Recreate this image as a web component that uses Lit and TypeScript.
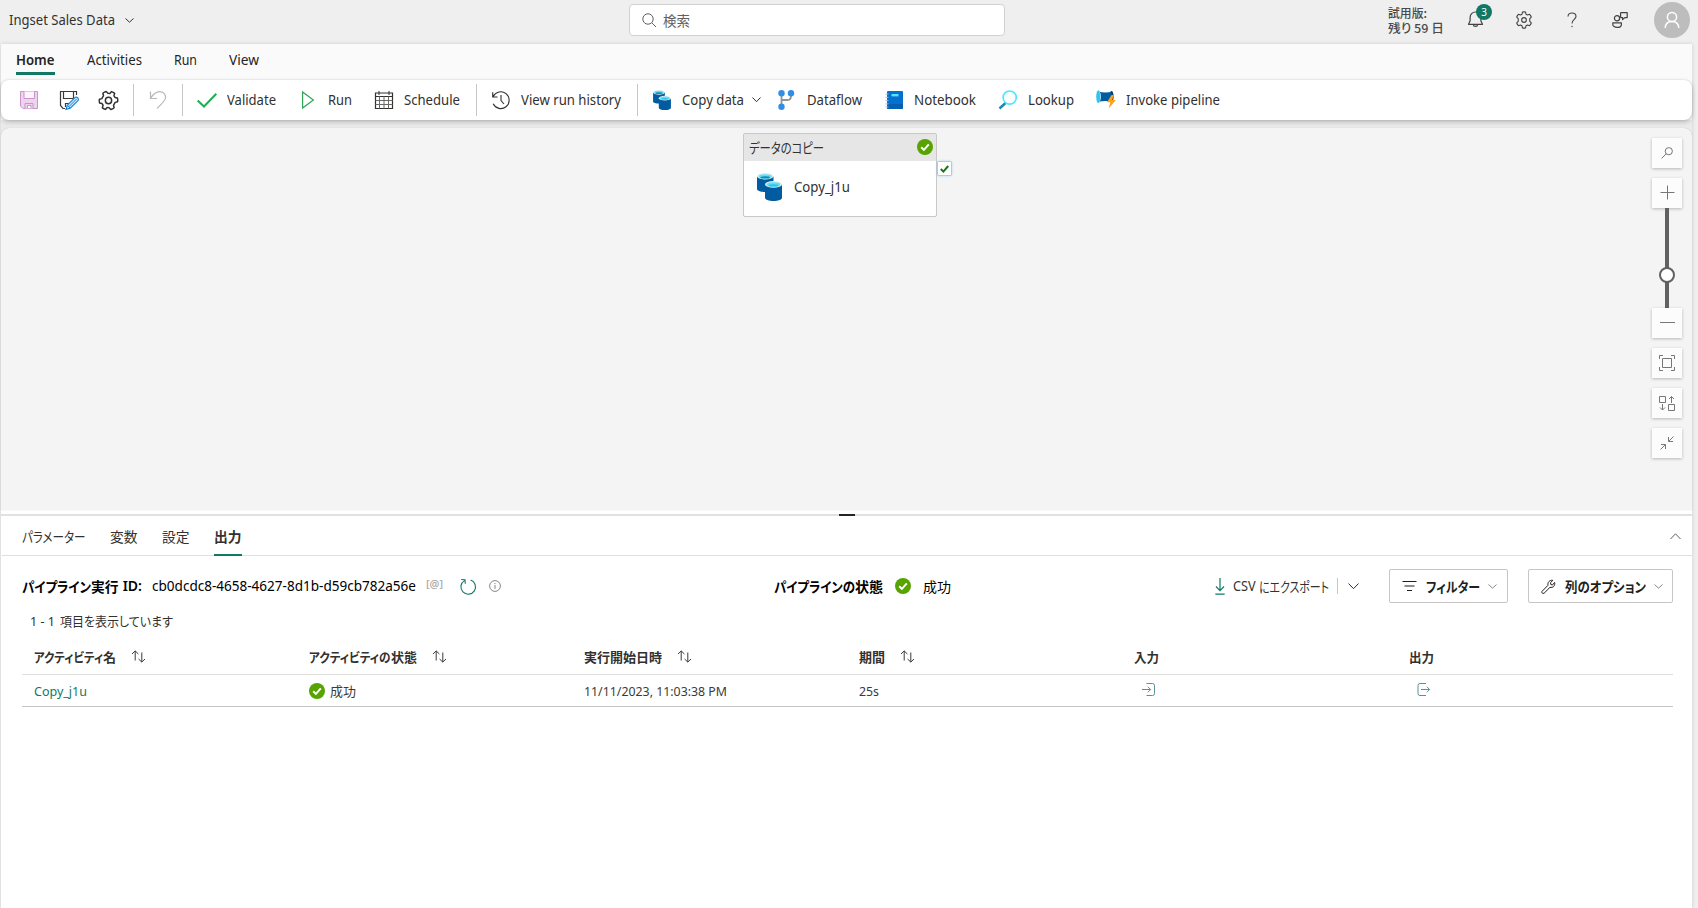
import { LitElement, html, svg, css, nothing } from "lit";
import { customElement, property } from "lit/decorators.js";

/* A label condensed or widened to an exact advance width. */
@customElement("fit-label")
class FitLabel extends LitElement {
  @property() text = "";
  @property({ type: Number }) w = 0;
  static styles = css`
    :host { display: inline-block; flex: none; white-space: pre; }
    .ink { display: inline-block; transform-origin: 0 50%; }
  `;
  updated() {
    const ink = this.renderRoot.querySelector(".ink") as HTMLElement;
    ink.style.transform = "none";
    const natural = ink.getBoundingClientRect().width;
    if (natural > 0) ink.style.transform = `scaleX(${this.w / natural})`;
    this.style.width = `${this.w}px`;
  }
  render() {
    return html`<span class="ink">${this.text}</span>`;
  }
}

const t = (text: string, w: number, cls = "") => html`<fit-label class=${cls} .text=${text} .w=${w}></fit-label>`;

const icon = (w: number, h: number, body: unknown, cls = "") =>
  html`<svg class="ic ${cls}" width=${w} height=${h} viewBox="0 0 ${w} ${h}" fill="none" stroke="currentColor">${body}</svg>`;

const chevron = (w: number, h: number, cls = "") =>
  icon(w, h, svg`<path d="M.5 .5L${w / 2} ${h - 0.8}L${w - 0.5} .5"/>`, cls);

const okCircle = icon(16, 16, svg`<circle cx="8" cy="8" r="8" fill="#57a300" stroke="none"/><path d="M4.2 8.2L6.9 10.9L11.8 5.4" stroke="#fff" stroke-width="2"/>`);

const gearPath = "M8.3 1.2Q10 .8 11.7 1.2L12.2 3.5L13.9 4.4L16.2 3.7Q17.5 5 18.1 6.7L16.4 8.4V11.6L18.1 13.3Q17.5 15 16.2 16.3L13.9 15.6L12.2 16.5L11.7 18.8Q10 19.2 8.3 18.8L7.8 16.5L6.1 15.6L3.8 16.3Q2.5 15 1.9 13.3L3.6 11.6V8.4L1.9 6.7Q2.5 5 3.8 3.7L6.1 4.4L7.8 3.5Z";
const gear = (s: number, r: number, sw: number, turn = 0) => html`<svg class="ic" width=${s} height=${s} viewBox="0 0 20 20" fill="none" stroke="currentColor" stroke-linejoin="round" stroke-width=${sw}><path d=${gearPath} transform="rotate(${turn} 10 10)"/><circle cx="10" cy="10" r=${r}/></svg>`;

const cylinders = (w: number, h: number) => html`<svg class="ic" width=${w} height=${h} viewBox="0 0 25 28">
  <path d="M0 3.5V16C0 17.8 4 19 8 19S16.5 17.8 16.5 16V3.5Z" fill="#005ba1"/>
  <ellipse cx="8.2" cy="3.3" rx="8.2" ry="3.2" fill="#e8e8e8"/><ellipse cx="8.2" cy="3.4" rx="6.6" ry="2.2" fill="#50e6ff"/><ellipse cx="8.2" cy="4.4" rx="4.8" ry="1.2" fill="#198ab3"/>
  <path d="M8 11.5V24.8C8 26.8 12 28 16.5 28S25 26.8 25 24.8V11.5Z" fill="#005ba1"/>
  <ellipse cx="16.5" cy="11.4" rx="8.5" ry="3.3" fill="#e8e8e8"/><ellipse cx="16.5" cy="11.5" rx="6.9" ry="2.3" fill="#50e6ff"/><ellipse cx="16.5" cy="12.4" rx="5" ry="1.2" fill="#32c5e6"/>
</svg>`;

const saveIcon = icon(20, 20, svg`<path d="M1.5 1.5H18.5V18.5H4L1.5 16Z" fill="#eed3ef" stroke="#c994cd"/><path d="M5 1.5V8.5H15.5V1.5" fill="#fbf4fb" stroke="#c994cd"/><path d="M6 18.5V13.5H14V18.5" fill="#eed3ef" stroke="#c994cd"/><path d="M8.5 18V15.5H12V18" fill="#fff" stroke="#c994cd"/>`);
const saveAsIcon = icon(20, 20, svg`<path d="M17.5 5V1.5H1.5V15.5L4 18.5H6M4.5 1.5V8.5H14.5V1.5M6.5 17V13.5H10" stroke="#3b3a39" stroke-width="1.2"/><path d="M7 19.3L8.3 15.3L15.9 7.6Q17.2 6.4 18.8 7.8Q20.2 9.4 19 10.6L11.2 18.2Z" fill="#cfe8fa" stroke="#1a86d9" stroke-width="1.2"/><path d="M8.5 15.3L11 18M10 16.6L17.5 9" stroke="#1a86d9"/>`);
const undoIcon = icon(20, 20, svg`<path d="M2.5 1.5V8.5H9M2.8 8C6 3 9 1.5 12 1.7C16 2 18 5 17.5 8C17 11 14 13.5 9 18.5" stroke="#b9b7b5" stroke-width="1.2"/>`);
const checkIcon = icon(20, 20, svg`<path d="M.7 10.5L7 16.5L19.3 3.8" stroke="#1fae53" stroke-width="2"/>`);
const playIcon = icon(20, 20, svg`<path d="M4.6 2V18L15.4 10Z" stroke="#2fa557" stroke-width="1.2"/>`);
const calendarIcon = icon(20, 20, svg`<path d="M1.5 3H18.5V18.5H1.5ZM1.5 6.5H18.5" stroke="#323130" stroke-width="1.2"/><path d="M5 1V5M15 1V5" stroke="#323130"/><path d="M1.5 10.5H18.5M1.5 14.5H18.5M5.5 6.5V18.5M10 6.5V18.5M14.5 6.5V18.5" stroke="#6b6967"/>`);
const historyIcon = icon(20, 20, svg`<path d="M1.7 2.2V7H6.5M2.2 6.5A8.4 8.4 0 1 1 2.2 13.8M10 5V10.5L13 14" stroke="#323130" stroke-width="1.1"/>`);
const flowIcon = icon(20, 20, svg`<path d="M4.5 4V16M14 4V6Q14 10 10.5 10H4.5" stroke="#949494" stroke-width="1.8"/><g fill="#2f8fe6" stroke="none"><circle cx="4.5" cy="3.3" r="3.2"/><circle cx="14" cy="3.3" r="3.2"/><circle cx="4.5" cy="16.8" r="3.2"/></g>`);
const notebookIcon = icon(20, 20, svg`<rect x="3" y="1" width="16" height="18" rx="1" fill="#0670ce" stroke="none"/><rect x="3" y="14" width="16" height="5" rx="1" fill="#0560b2" stroke="none"/><rect x="7.5" y="4" width="7" height="2.4" fill="#50e6ff" stroke="none"/><path d="M1.5 4H4.5M1.5 7.3H4.5M1.5 10.6H4.5M1.5 13.9H4.5M1.5 17H4.5" stroke="#9cc3e4"/>`);
const lookupIcon = icon(20, 20, svg`<path d="M7.5 13L1.5 18.5" stroke="#1f86b0" stroke-width="2.4"/><circle cx="11.7" cy="7.6" r="6.6" stroke="#50e6ff" stroke-width="1.7" fill="#fdffff"/>`);
const invokeIcon = icon(20, 20, svg`<g stroke="none"><path d="M2.5 1.8Q9 3.4 16.5 1.8V11.8Q9 10.4 2.5 11.8Z" fill="#005ba1"/><ellipse cx="2.4" cy="6.6" rx="2.2" ry="6.4" fill="#32c5e6"/><path d="M3 .4Q5.4 6.6 3 12.8Q7 6.6 3 .4Z" fill="#bfe6f5"/><path d="M14.5 1Q17.6 .4 17.6 6.8Q17.6 12.4 14.5 12Q16.4 6.6 14.5 1Z" fill="#003f73"/><path d="M15.5 5L11 12.2H14.3L12.8 18.5L19.8 10H16.3L17.5 5Z" fill="#fea11b"/></g>`);

const sortIcon = icon(15, 13, svg`<path d="M4.2 10.5V1M1 4L4.2 .9L7.4 4M10.8 2.5V12M7.6 9L10.8 12.1L14 9" stroke="#3b3a39"/>`, "sort");

@customElement("app-root")
class AppRoot extends LitElement {
  static styles = css`
    :host {
      display: block; width: 1698px; height: 908px; overflow: hidden; background: #efefef; color: #323130;
      font: 13.5px/20px "Noto Sans", "Noto Sans CJK JP", sans-serif; font-feature-settings: "palt";
    }
    * { box-sizing: border-box; }
    .ic { display: block; flex: none; overflow: visible; }
    .row { display: flex; align-items: center; }
    .jp { font-family: "Noto Sans CJK JP", sans-serif; font-size: 14px; }
    .small { font-size: 13px; }
    .semi { font-weight: 600; }
    .jp.semi { font-weight: 700; }

    .top { display: grid; grid-template-columns: 629px 376px 1fr; height: 44px; padding-bottom: 4px; align-items: center; }
    .crumb { padding-left: 9px; gap: 10px; height: 38px; }
    .search { height: 32px; background: #fff; border: 1px solid #d1d1d1; border-radius: 4px; padding-left: 12px; gap: 6px; color: #616161; }
    .tools { padding-left: 383px; color: #424242; height: 40px; }
    .trial { width: 80px; font-size: 12px; line-height: 15px; display: flex; flex-direction: column; color: #4a4a4a; font-weight: 500; font-family: "Noto Sans CJK JP", sans-serif; }
    .bell { position: relative; width: 16px; height: 16px; }
    .badge { position: absolute; left: 8px; top: -8px; width: 16px; height: 16px; border-radius: 8px; background: #117865; color: #fff; font-size: 10px; line-height: 16px; text-align: center; }
    .g1 { margin-left: 31px; } .g2 { margin-left: 34px; } .g3 { margin-left: 35px; }
    .avatar { margin-left: 26px; width: 36px; height: 36px; border-radius: 18px; background: #bdbdbd; color: #fff; display: grid; place-items: center; }

    .page { width: 1691px; margin-left: 1px; height: 864px; background: #fafafa; box-shadow: 0 0 4px rgba(0,0,0,.14); }
    .menu { height: 36px; padding-left: 15px; gap: 32px; align-items: flex-start; color: #242424; }
    .tab { height: 31px; padding-top: 6px; }
    .tab.on { border-bottom: 3px solid #117865; font-weight: 600; }
    .ribbon { position: relative; height: 40px; background: #fff; border-radius: 8px; box-shadow: 0 2px 5px rgba(0,0,0,.22), 0 0 2px rgba(0,0,0,.12); padding-left: 18px; }
    .cmd { gap: 10px; margin-right: 22px; }
    .cmd.tight { margin-right: 16px; }
    .cmd.drop { gap: 8px; margin: 0 15.5px 0 1px; }
    .cmd.drop .ic:first-child { margin-right: 3px; }
    .only { margin-right: 20px; }
    .only.last { margin: 0 14px 0 -1px; }
    .only.undo { margin: 0 14px; }
    .sep { width: 1px; height: 32px; background: #c8c6c4; }
    .sep.pad { margin-right: 14px; }

    .stage { height: 390px; padding-top: 8px; background: #ebebeb; }
    .canvas { position: relative; height: 382px; background: #f4f4f4; border-radius: 8px 8px 0 0; box-shadow: 0 0 1px rgba(0,0,0,.25); }
    .node { position: absolute; left: 742px; top: 5px; width: 194px; height: 84px; background: #fff; border: 1px solid #c8c8c8; border-radius: 2px; }
    .nodehead { height: 27px; background: #e6e6e6; padding: 0 3px 1px 5px; justify-content: space-between; color: #323130; }
    .nodebody { height: 55px; padding: 0 0 4px 13px; gap: 12px; }
    .port { position: absolute; left: 937px; top: 34px; width: 13px; height: 13px; background: #fff; box-shadow: 0 0 0 .5px #8cbde8, 0 0 3px #74b3ec; display: grid; place-items: center; }
    .zoom { position: absolute; left: 1651px; top: 10px; width: 30px; display: flex; flex-direction: column; gap: 10px; color: #777; }
    .sq { width: 30px; height: 30px; padding-bottom: 1px; background: #fcfcfc; box-shadow: 0 1px 3px rgba(0,0,0,.25); display: grid; place-items: center; }
    .slide { display: flex; flex-direction: column; align-items: center; }
    .track { width: 4px; height: 100px; background: #616161; padding-top: 59px; }
    .knob { width: 16px; height: 16px; margin-left: -6px; border-radius: 8px; border: 2px solid #616161; background: #fff; }

    .panel { height: 398px; background: #fff; padding-top: 4px; }
    .grip { height: 2px; background: #e1e1e1; padding-left: 838px; }
    .grip i { display: block; width: 16px; height: 2px; background: #252423; }
    .tabs { margin-left: 1px; height: 40px; border-bottom: 1px solid #e1dfdd; padding-left: 20px; gap: 24.5px; align-items: flex-start; color: #323130; }
    .ptab { height: 40px; padding-top: 10px; }
    .ptab.on { border-bottom: 2px solid #117865; }
    .up { margin: 17px 11px 0 auto; transform: scaleY(-1); color: #605e5c; }
    .body { padding: 13px 19px 0 21px; }
    .info { height: 34px; color: #000; }
    .id { width: 752px; }
    .state { width: 440.5px; gap: 12px; }
    .at { font-size: 11px; color: #b3b0ad; margin: -4px 17px 0 10px; font-weight: 600; }
    .guid { margin-left: 10px; }
    .teal { color: #117865; }
    .refresh { margin-right: 13px; color: #117865; }
    .csv { color: #323130; gap: 8px; width: 174.5px; }
    .vsep { width: 1px; height: 16px; background: #c8c6c4; margin-right: 2px; }
    .btn { height: 34px; border: 1px solid #c8c6c4; border-radius: 2px; width: 119px; padding-left: 12px; color: #201f1e; gap: 8px; }
    .btn.wide { width: 145px; margin-left: auto; padding-left: 12px; }
    .btn .txt { margin-left: 1px; }
    .btn.wide .txt { margin-left: 2px; }
    .muted { color: #8a8886; }
    .count { margin: 8px 0 0 8px; height: 20px; gap: 5px; }
    .grid { display: grid; grid-template-columns: repeat(6, 275.1px); padding-left: 12px; align-items: center; font-size: 13px; }
    .head { height: 44px; border-bottom: 1px solid #e1dfdd; padding-top: 8px; color: #323130; }
    .line { height: 32px; border-bottom: 1px solid #c8c6c4; color: #3b3a39; }
    .sort { margin-left: 15px; }
    .cellok { gap: 5px; }
    .io { color: #5b8f99; margin: -3px 0 0 7.5px; }
  `;

  private heads: [Array<[string, number]>, boolean][] = [
    [[["アクティビティ", 69], ["名", 13]], true],
    [[["アクティビティの", 81.5], ["状態", 26]], true],
    [[["実行開始日時", 78]], true],
    [[["期間", 26]], true],
    [[["入力", 25]], false],
    [[["出力", 25]], false],
  ];

  private cmd(ic: unknown, text: string, w: number, cls = "") {
    return html`<div class="row cmd ${cls}">${ic}${t(text, w)}${cls === "drop" ? chevron(9, 5.5) : nothing}</div>`;
  }

  render() {
    return html`
      <header class="top">
        <div class="row crumb">${t("Ingset Sales Data", 106)}${chevron(9, 5)}</div>
        <div class="row search">${icon(15, 15, svg`<circle cx="6" cy="6" r="5.2"/><path d="M9.8 9.8L14 14"/>`)}${t("検索", 27, "jp")}</div>
        <div class="row tools">
          <div class="trial">${t("試用版:", 39)}${t("残り 59 日", 56)}</div>
          <div class="row bell">
            <svg class="ic" width="18" height="18" viewBox="0 0 18 18" fill="none" stroke="currentColor" stroke-linejoin="round"><path d="M9 1.5C5.8 1.5 3.6 3.8 3.6 7V10.5L2 13.8H16L14.4 10.5V7C14.4 3.8 12.2 1.5 9 1.5ZM6.8 14C7 16.6 11 16.6 11.2 14" transform="translate(-1.5 -.5)" stroke-width="1.2"/></svg>
            <span class="badge">3</span>
          </div>
          <div class="g1">${gear(18, 2.6, 1.2)}</div>
          <div class="g2">${icon(10, 16, svg`<path d="M1 4.6C1 2.4 2.6 1 5 1S9 2.4 9 4.6C9 7.4 5 7.6 5 11.5" stroke-width="1.1"/><circle cx="5" cy="14.5" r=".7" fill="currentColor" stroke="none"/>`)}</div>
          <div class="g3">${icon(16, 16, svg`<circle cx="5" cy="6.3" r="2.6" stroke-width="1.2"/><path d="M.8 10.8H9.4V12.4C9.4 14.3 7.4 15.4 5.1 15.4S.8 14.3 .8 12.4ZM9.2 .7H15.2V5.6H12.8L10.6 7.6V5.6H9.2Q8.6 5.6 8.6 5V1.2Q8.6 .7 9.2 .7Z" stroke-width="1.2" stroke-linejoin="round"/>`)}</div>
          <div class="avatar">${icon(16, 18, svg`<circle cx="8" cy="6" r="4.6" stroke-width="1.5"/><path d="M1.2 17C1.4 12.8 4 10.6 8 10.6S14.6 12.8 14.8 17" stroke-width="1.5"/>`)}</div>
        </div>
      </header>
      <main class="page">
        <nav class="row menu">
          <div class="tab on">${t("Home", 38.5)}</div>
          <div class="tab">${t("Activities", 55)}</div>
          <div class="tab">${t("Run", 23)}</div>
          <div class="tab">${t("View", 30)}</div>
        </nav>
        <div class="row ribbon">
          <div class="only">${saveIcon}</div>
          <div class="only">${saveAsIcon}</div>
          <div class="only last">${gear(21, 3, 1.4, 30)}</div>
          <i class="sep"></i>
          <div class="only undo">${undoIcon}</div>
          <i class="sep pad"></i>
          ${this.cmd(checkIcon, "Validate", 49)}
          ${this.cmd(playIcon, "Run", 24)}
          ${this.cmd(calendarIcon, "Schedule", 56, "tight")}
          <i class="sep pad"></i>
          ${this.cmd(historyIcon, "View run history", 100, "tight")}
          <i class="sep pad"></i>
          ${this.cmd(cylinders(18, 20), "Copy data", 62, "drop")}
          ${this.cmd(flowIcon, "Dataflow", 55)}
          ${this.cmd(notebookIcon, "Notebook", 62)}
          ${this.cmd(lookupIcon, "Lookup", 46)}
          ${this.cmd(invokeIcon, "Invoke pipeline", 94)}
        </div>
        <section class="stage">
          <div class="canvas">
            <div class="node">
              <div class="row nodehead">${t("データのコピー", 75, "jp")}${okCircle}</div>
              <div class="row nodebody">${cylinders(25, 28)}${t("Copy_j1u", 56)}</div>
            </div>
            <div class="port">${icon(9, 8, svg`<path d="M.8 4L3.4 6.6L8.2 1" stroke="#107c10" stroke-width="2"/>`)}</div>
            <div class="zoom">
              <div class="sq">${icon(12, 12, svg`<circle cx="7.8" cy="4.2" r="3.6"/><path d="M5.2 6.8L.5 11.5"/>`)}</div>
              <div class="slide">
                <div class="sq">${icon(15, 15, svg`<path d="M7.5 .5V14.5M.5 7.5H14.5"/>`)}</div>
                <div class="track"><div class="knob"></div></div>
                <div class="sq">${icon(15, 15, svg`<path d="M0 7.5H15"/>`)}</div>
              </div>
              <div class="sq">${icon(16, 16, svg`<path d="M3.5 3.5H12.5V12.5H3.5ZM.5 4V.5H4M12 .5H15.5V4M15.5 12V15.5H12M4 15.5H.5V12"/>`)}</div>
              <div class="sq">${icon(16, 16, svg`<path d="M.5 1.5H6.5V7.5H.5ZM9.5 9.5H15.5V15.5H9.5ZM12.5 8V1.5M10 4L12.5 1.5L15 4M3.5 9V15M1 12.5L3.5 15L6 12.5"/>`)}</div>
              <div class="sq">${icon(14, 14, svg`<path d="M13.5 .5L9 5M8.5 1V5.5H13M.5 13.5L5 9M1 8.5H5.5V13"/>`)}</div>
            </div>
          </div>
        </section>
        <section class="panel">
          <div class="grip"><i></i></div>
          <nav class="row tabs">
            <div class="ptab">${t("パラメーター", 63.5, "jp")}</div>
            <div class="ptab">${t("変数", 27.5, "jp")}</div>
            <div class="ptab">${t("設定", 27.5, "jp")}</div>
            <div class="ptab on">${t("出力", 27.5, "jp semi")}</div>
            ${chevron(11, 6.5, "up")}
          </nav>
          <div class="body">
            <div class="row info">
              <div class="row id">
                ${t("パイプライン", 69, "jp semi")}${t("実行", 27.5, "jp semi")}${t(" ID:", 23, "semi")}
                ${t("cb0dcdc8-4658-4627-8d1b-d59cb782a56e", 264, "guid")}
                ${t("[@]", 17, "at")}
                <div class="refresh">${icon(16, 17, svg`<path d="M4.5 2.6A7.3 7.3 0 1 0 10.6 2M1.2 1.5L5 1.8L5.3 5.8" stroke-width="1.1"/>`)}</div>
                ${icon(12, 12, svg`<circle cx="6" cy="6" r="5.4"/><path d="M6 5V9M6 3V4.1"/>`, "muted")}
              </div>
              <div class="row state">
                <div class="row">${t("パイプラインの", 81, "jp semi")}${t("状態", 28, "jp semi")}</div>
                ${okCircle}${t("成功", 28, "jp")}
              </div>
              <div class="row csv">
                ${icon(10, 17, svg`<path d="M5 0V12.5M1 8.5L5 12.6L9 8.5M.3 16.2H9.7" stroke="#117865" stroke-width="1.2"/>`)}
                <div class="row">${t("CSV ", 26)}${t("にエクスポート", 70, "jp")}</div>
                <i class="vsep"></i>${chevron(11, 6.5)}
              </div>
              <div class="row btn">
                ${icon(15, 12, svg`<path d="M.5 1.5H14.5M2.5 6H12.5M5 10.5H10" stroke-width="1.2"/>`)}
                ${t("フィルター", 54, "jp semi txt")}${chevron(9, 5, "muted")}
              </div>
              <div class="row btn wide">
                ${icon(14, 15, svg`<path d="M1 12.4L7 6.3C6.4 3.4 8.5 .8 11.8 1.3L9.5 3.8L9.9 5.6L11.6 5.9L13.6 3.4C14.4 6.8 11.9 9.1 9 8.3L3.1 14.2C1.8 15 .2 13.7 1 12.4Z" stroke-linejoin="round"/>`)}
                ${t("列のオプション", 81, "jp semi txt")}${chevron(9, 5, "muted")}
              </div>
            </div>
            <div class="row count">${t("1 - 1", 25, "small")}${t("項目を表示しています", 113, "jp small")}</div>
            <div class="grid head">
              ${this.heads.map(([parts, sortable]) => html`<div class="row">${parts.map(([s, w]) => t(s, w, "jp small semi"))}${sortable ? sortIcon : nothing}</div>`)}
            </div>
            <div class="grid line">
              ${t("Copy_j1u", 53, "teal")}
              <div class="row cellok">${okCircle}${t("成功", 26, "jp small")}</div>
              ${t("11/11/2023, 11:03:38 PM", 143)}
              ${t("25s", 20)}
              <div class="io">${icon(13, 13, svg`<path d="M4.5 .5H10.5Q12.5 .5 12.5 2.5V10.5Q12.5 12.5 10.5 12.5H4.5M0 6.5H8.5M5.8 3.7L8.6 6.5L5.8 9.3"/>`)}</div>
              <div class="io">${icon(13, 13, svg`<path d="M9 .5H3Q1 .5 1 2.5V10.5Q1 12.5 3 12.5H9M4 6.5H12.5M9.8 3.7L12.6 6.5L9.8 9.3"/>`)}</div>
            </div>
          </div>
        </section>
      </main>
    `;
  }
}
